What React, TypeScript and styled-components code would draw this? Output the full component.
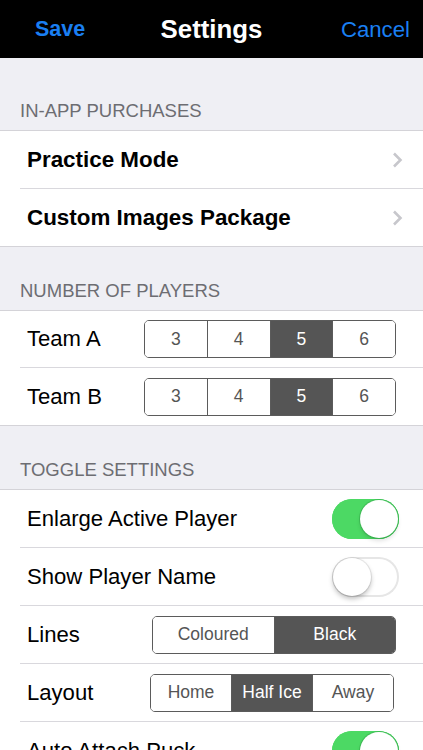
import React from "react";
import styled, { createGlobalStyle } from "styled-components";

const Global = createGlobalStyle`
  html, body { margin: 0; padding: 0; }
  body {
    background: #efeff4;
    font-family: "Liberation Sans", Arial, Helvetica, sans-serif;
    -webkit-font-smoothing: antialiased;
  }
  * { box-sizing: border-box; }
`;

const Page = styled.div`
  width: 423px;
  height: 750px;
  overflow: hidden;
  background: #efeff4;
`;

const NavBar = styled.div`
  height: 58px;
  background: #000;
  display: grid;
  grid-template-columns: 1fr auto 1fr;
  align-items: center;
  padding: 1px 13px 0 13px;
`;

const NavButton = styled.span<{ $bold?: boolean; $right?: boolean }>`
  color: #1a7ff2;
  font-size: ${(p) => (p.$bold ? "21.5px" : "22.2px")};
  font-weight: ${(p) => (p.$bold ? 700 : 400)};
  justify-self: ${(p) => (p.$right ? "end" : "start")};
  margin-left: ${(p) => (p.$right ? "0" : "22px")};
`;

const Title = styled.span`
  color: #fff;
  font-size: 25.8px;
  font-weight: 700;
`;

const GroupHeader = styled.div<{ $first?: boolean }>`
  height: ${(p) => (p.$first ? "72px" : "63px")};
  display: flex;
  align-items: flex-end;
  padding: 0 0 8px 20px;
  color: #6d6d72;
  font-size: 18.5px;
  line-height: 22px;
`;

const Section = styled.div`
  background: #fff;
  border-top: 1px solid #d4d3d8;
  border-bottom: 1px solid #d4d3d8;
`;

const Row = styled.div<{ $tight?: boolean }>`
  margin-left: 20px;
  height: ${(p) => (p.$tight ? "57px" : "58px")};
  border-bottom: 1px solid #d9d8dd;
  display: flex;
  align-items: center;
  justify-content: space-between;
  padding: 0 24px 0 7px;
  &:last-child {
    border-bottom: none;
    height: 57px;
  }
`;

const Label = styled.span<{ $bold?: boolean }>`
  color: #000;
  font-size: ${(p) => (p.$bold ? "22.4px" : "22.1px")};
  font-weight: ${(p) => (p.$bold ? 700 : 400)};
`;

const Chevron = styled.svg`
  width: 11px;
  height: 16px;
  margin-right: -4px;
`;

const Segmented = styled.div<{ $width: number; $right: number }>`
  width: ${(p) => p.$width}px;
  height: 38px;
  margin-right: ${(p) => p.$right}px;
  border: 1px solid #5b5b5b;
  border-radius: 5px;
  overflow: hidden;
  display: flex;
`;

const Segment = styled.div<{ $active?: boolean }>`
  flex: 1;
  display: flex;
  align-items: center;
  justify-content: center;
  font-size: 17.5px;
  color: ${(p) => (p.$active ? "#fff" : "#555")};
  background: ${(p) => (p.$active ? "#555555" : "#fff")};
  & + & {
    border-left: 1px solid #5b5b5b;
  }
`;

const Toggle = styled.div<{ $on?: boolean }>`
  width: 67px;
  height: 40px;
  border-radius: 20px;
  display: flex;
  align-items: center;
  justify-content: ${(p) => (p.$on ? "flex-end" : "flex-start")};
  background: ${(p) => (p.$on ? "#4cd964" : "#fff")};
  box-shadow: inset 0 0 0 2px ${(p) => (p.$on ? "#4cd964" : "#e6e6e6")};
  padding: 1px;
`;

const Knob = styled.div<{ $on?: boolean }>`
  width: 38px;
  height: 38px;
  border-radius: 50%;
  background: #fff;
  box-shadow: ${(p) =>
    p.$on
      ? "0 0 0 1px rgba(40,140,60,0.35), 0 3px 4px rgba(0,0,0,0.12)"
      : "0 0 0 1px rgba(0,0,0,0.08), 0 3px 5px rgba(0,0,0,0.25)"};
`;

const ChevronIcon = () => (
  <Chevron viewBox="0 0 11 16">
    <path
      d="M2 1.5 L8.5 8 L2 14.5"
      fill="none"
      stroke="#c7c7cc"
      strokeWidth="2.6"
      strokeLinecap="butt"
      strokeLinejoin="miter"
    />
  </Chevron>
);

const Seg = ({
  items,
  active,
  width,
  right,
}: {
  items: string[];
  active: number;
  width: number;
  right: number;
}) => (
  <Segmented $width={width} $right={right}>
    {items.map((it, i) => (
      <Segment key={it} $active={i === active}>
        {it}
      </Segment>
    ))}
  </Segmented>
);

export default function App() {
  return (
    <Page>
      <Global />
      <NavBar>
        <NavButton $bold>Save</NavButton>
        <Title>Settings</Title>
        <NavButton $right>Cancel</NavButton>
      </NavBar>

      <GroupHeader $first>IN-APP PURCHASES</GroupHeader>
      <Section>
        <Row>
          <Label $bold>Practice Mode</Label>
          <ChevronIcon />
        </Row>
        <Row>
          <Label $bold>Custom Images Package</Label>
          <ChevronIcon />
        </Row>
      </Section>

      <GroupHeader>NUMBER OF PLAYERS</GroupHeader>
      <Section>
        <Row $tight>
          <Label>Team A</Label>
          <Seg items={["3", "4", "5", "6"]} active={2} width={252} right={3} />
        </Row>
        <Row $tight>
          <Label>Team B</Label>
          <Seg items={["3", "4", "5", "6"]} active={2} width={252} right={3} />
        </Row>
      </Section>

      <GroupHeader>TOGGLE SETTINGS</GroupHeader>
      <Section>
        <Row>
          <Label>Enlarge Active Player</Label>
          <Toggle $on>
            <Knob $on />
          </Toggle>
        </Row>
        <Row>
          <Label>Show Player Name</Label>
          <Toggle>
            <Knob />
          </Toggle>
        </Row>
        <Row>
          <Label>Lines</Label>
          <Seg items={["Coloured", "Black"]} active={1} width={244} right={3} />
        </Row>
        <Row>
          <Label>Layout</Label>
          <Seg items={["Home", "Half Ice", "Away"]} active={1} width={244} right={5} />
        </Row>
        <Row>
          <Label>Auto Attach Puck</Label>
          <Toggle $on>
            <Knob $on />
          </Toggle>
        </Row>
      </Section>
    </Page>
  );
}
